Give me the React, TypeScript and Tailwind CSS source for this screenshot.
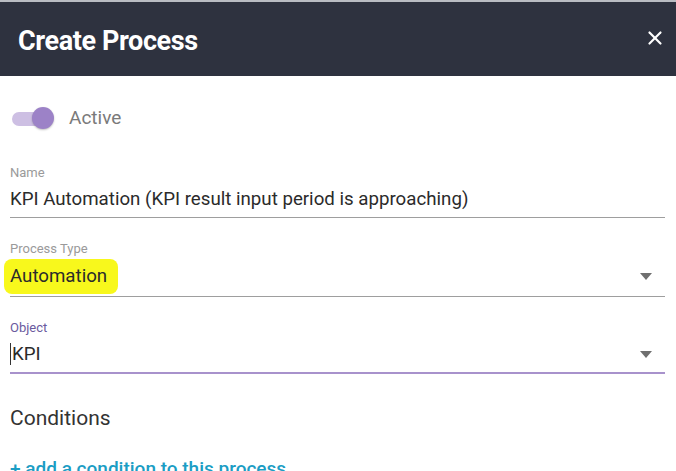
import { X } from "lucide-react";

function Caret() {
  return (
    <svg width="12" height="7" viewBox="0 0 12 7" className="shrink-0">
      <path d="M0 0 L12 0 L6 7 Z" fill="#6f6f6f" />
    </svg>
  );
}

function Field({
  label,
  focused,
  select,
  tall,
  children,
}: {
  label: string;
  focused?: boolean;
  select?: boolean;
  tall?: boolean;
  children: React.ReactNode;
}) {
  const row = tall ? "h-[39px]" : "h-[36px]";
  return (
    <div className="flex flex-col">
      <div
        className={
          focused
            ? "text-[13px] leading-[16px] text-[#6a5a9e]"
            : "text-[13px] leading-[16px] text-[#9a9a9a]"
        }
      >
        {label}
      </div>
      <div
        className={
          focused
            ? `flex items-center ${row} box-content border-b-2 border-[#a892cc]`
            : `flex items-center ${row} box-content border-b border-[#9e9e9e]`
        }
      >
        <div className="flex-1 text-[18.7px] text-[#2b2b2b]">{children}</div>
        {select && (
          <div className="pr-[13px]">
            <Caret />
          </div>
        )}
      </div>
    </div>
  );
}

export default function App() {
  return (
    <div
      className="w-[676px] h-[471px] overflow-hidden bg-white"
      style={{ fontFamily: "Roboto, 'Liberation Sans', sans-serif" }}
    >
      <div className="border-t-2 border-[#b9bcc2] bg-[#2e323f] h-[76px] flex items-center justify-between pl-[18px] pr-[10px]">
        <h1 className="text-[27px] font-bold text-white tracking-[-0.4px] pt-[4px]">
          Create Process
        </h1>
        <X size={22} strokeWidth={2.4} color="#ffffff" className="mb-[2px]" />
      </div>

      <div className="pl-[10px] pr-[11px]">
        <div className="flex items-center gap-[17px] pt-[28px] h-[56px]">
          <div className="relative w-[40px] h-[20px] ml-[2px]">
            <div className="absolute left-0 right-0 top-[4px] h-[14px] rounded-full bg-[#cdbfe3]" />
            <div className="absolute right-[-2px] top-[-1px] w-[22px] h-[22px] rounded-full bg-[#9c82c7] shadow-[0_1px_2px_rgba(0,0,0,0.25)]" />
          </div>
          <span className="text-[19px] text-[#7a7a7a]">Active</span>
        </div>

        <div className="flex flex-col gap-[23px] pt-[33px]">
          <Field label="Name">
            KPI Automation (KPI result input period is approaching)
          </Field>
          <Field label="Process Type" select tall>
            <span className="inline-block bg-[#f8f81c] rounded-[8px] -ml-[6px] pl-[6px] pr-[11px] py-[3px]">
              Automation
            </span>
          </Field>
          <Field label="Object" focused select>
            <span className="border-l border-[#333] pl-[1px]">KPI</span>
          </Field>
        </div>

        <div className="pt-[29px] text-[21px] text-[#333333]">Conditions</div>
        <div className="pt-[20px] text-[19px] font-medium text-[#1b9dc4]">
          + add a condition to this process
        </div>
      </div>
    </div>
  );
}
